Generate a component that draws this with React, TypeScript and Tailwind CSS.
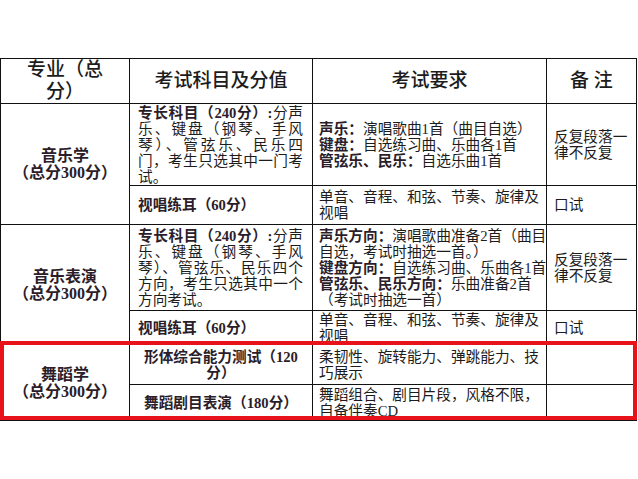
import type { ReactNode } from 'react'

const td = 'border border-[#111] align-middle p-0'
const bold = 'font-bold text-[#2b1d29]'

function Line({ children, last }: { children: ReactNode; last?: boolean }) {
  return (
    <span className={last ? 'block' : 'block text-justify [text-align-last:justify]'}>{children}</span>
  )
}

function Major({ name }: { name: string }) {
  return (
    <td rowSpan={2} className={`${td} text-center text-[16px] leading-[17px] ${bold}`}>
      <div>{name}</div>
      <div>（总分300分）</div>
    </td>
  )
}

export default function App() {
  return (
    <div className="relative h-[479px] w-[638px] overflow-hidden bg-white pt-[58px] font-['Liberation_Serif','Noto_Sans_CJK_SC',serif] text-[#1c1c1c]">
      <table className="w-[636px] table-fixed border-collapse">
        <colgroup>
          <col className="w-[129px]" />
          <col className="w-[183px]" />
          <col className="w-[234px]" />
          <col className="w-[90px]" />
        </colgroup>
        <tbody className="text-[14.67px] leading-[16px]">
          <tr className="h-[43px] text-[19px] leading-[22px]">
            <td className={`${td} text-center font-medium`}>
              专业（总
              <br />
              分）
            </td>
            <td className={`${td} text-center font-medium`}>考试科目及分值</td>
            <td className={`${td} text-center font-medium`}>考试要求</td>
            <td className={`${td} text-center font-medium`}>备&nbsp;注</td>
          </tr>

          <tr className="h-[82px]">
            <Major name="音乐学" />
            <td className={`${td} pl-2 pr-[9px]`}>
              <Line>
                <b className={bold}>专长科目（240分）:</b>分声
              </Line>
              <Line>乐、键盘（钢琴、手风</Line>
              <Line>琴）、管弦乐、民乐四</Line>
              <Line>门，考生只选其中一门考</Line>
              <Line last>试。</Line>
            </td>
            <td className={`${td} pl-[6px] whitespace-nowrap`}>
              <div>
                <b className={bold}>声乐：</b>演唱歌曲1首（曲目自选）
              </div>
              <div>
                <b className={bold}>键盘：</b>自选练习曲、乐曲各1首
              </div>
              <div>
                <b className={bold}>管弦乐、民乐：</b>自选乐曲1首
              </div>
            </td>
            <td className={`${td} pl-[7px]`}>
              反复段落一
              <br />
              律不反复
            </td>
          </tr>

          <tr className="h-[39px]">
            <td className={`${td} pl-2 ${bold}`}>视唱练耳（60分）</td>
            <td className={`${td} pl-[6px] whitespace-nowrap`}>
              单音、音程、和弦、节奏、旋律及
              <br />
              视唱
            </td>
            <td className={`${td} pl-[7px]`}>口试</td>
          </tr>

          <tr className="h-[86px]">
            <Major name="音乐表演" />
            <td className={`${td} pl-2 pr-[9px]`}>
              <Line>
                <b className={bold}>专长科目（240分）:</b>分声
              </Line>
              <Line>乐、键盘（钢琴、手风</Line>
              <Line>琴）、管弦乐、民乐四个</Line>
              <Line>方向，考生只选其中一个</Line>
              <Line last>方向考试。</Line>
            </td>
            <td className={`${td} pl-[6px] whitespace-nowrap`}>
              <div>
                <b className={bold}>声乐方向：</b>演唱歌曲准备2首（曲目
              </div>
              <div>自选，考试时抽选一首。）</div>
              <div>
                <b className={bold}>键盘方向：</b>自选练习曲、乐曲各1首
              </div>
              <div>
                <b className={bold}>管弦乐、民乐方向：</b>乐曲准备2首
              </div>
              <div>（考试时抽选一首）</div>
            </td>
            <td className={`${td} pl-[7px]`}>
              反复段落一
              <br />
              律不反复
            </td>
          </tr>

          <tr className="h-[34px]">
            <td className={`${td} pl-2 ${bold}`}>视唱练耳（60分）</td>
            <td className={`${td} pl-[6px] whitespace-nowrap`}>
              单音、音程、和弦、节奏、旋律及
              <br />
              视唱
            </td>
            <td className={`${td} pl-[7px]`}>口试</td>
          </tr>

          <tr className="h-[40px]">
            <Major name="舞蹈学" />
            <td className={`${td} text-center ${bold}`}>
              形体综合能力测试（120
              <br />
              分）
            </td>
            <td className={`${td} pl-[6px] whitespace-nowrap`}>
              柔韧性、旋转能力、弹跳能力、技
              <br />
              巧展示
            </td>
            <td className={td}></td>
          </tr>

          <tr className="h-[36px]">
            <td className={`${td} text-center ${bold}`}>舞蹈剧目表演（180分）</td>
            <td className={`${td} pl-[6px] whitespace-nowrap`}>
              舞蹈组合、剧目片段，风格不限，
              <br />
              自备伴奏CD
            </td>
            <td className={td}></td>
          </tr>
        </tbody>
      </table>

      <div className="pointer-events-none absolute left-0 top-[341px] h-[79px] w-[637px] border-4 border-[#e8121b]" />
    </div>
  )
}
